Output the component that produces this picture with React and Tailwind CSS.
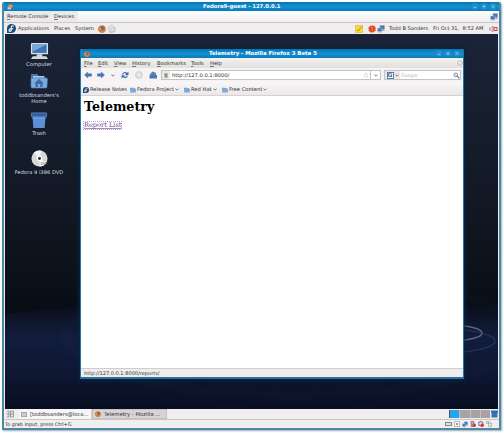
import React from "react";

function Fx({ className = "" }) {
  return (
    <svg viewBox="0 0 16 16" className={"shrink-0 " + className}>
      <circle cx="8" cy="8" r="7.5" fill="#d97a35" />
      <circle cx="8.5" cy="6.5" r="4.2" fill="#5a6f96" />
      <path d="M1 4C3 6 5 5 7 6L5 9C8 12 12 11 14 6C17 13 10 17 5 15C0 12 0 8 1 4Z" fill="#df8233" />
      <path d="M3 6L7 6L5 9Z" fill="#f6b84a" />
    </svg>
  );
}
function Fedora({ className = "" }) {
  return (
    <svg viewBox="0 0 16 16" className={"shrink-0 " + className}>
      <path d="M8 0a8 8 0 1 1 0 16H1.500Q0 16 0 14.500V8A8 8 0 0 1 8 0Z" fill="#1d4a7c" />
      <path d="M12 4C9 2 7.500 4 7.500 6V11C7.500 14 3.500 13.500 3.500 11S5 8.500 7 8.500H11" fill="none" stroke="#fff" strokeWidth="1.900" />
    </svg>
  );
}
function Folder({ className = "", home = false }) {
  return (
    <svg viewBox="0 0 18 16" className={"shrink-0 " + className}>
      <path d="M1 2Q1 1 2 1H7L9 3H15V6H1Z" fill="#4875ad" />
      <rect x="3" y="3" width="11" height="5" fill="#a9c6e8" />
      <path d="M1 5H16.500Q17.500 5 17.400 6L17 14Q17 15 16 15H2Q1 15 1 14Z" fill="#7eabdf" stroke="#4b7ab5" strokeWidth=".7" />
      {home && <path d="M9 6L14 10.500H12.500V14H10.200V11H7.800V14H5.500V10.500H4Z" fill="#3d6ba8" />}
    </svg>
  );
}
function Buttons() {
  return (
    <div className="ml-auto flex shrink-0 gap-[1px]">
      <WinButton d="M2.500 5H5.500" />
      <WinButton d="M2.500 4H5.500M4 2.500V5.500" />
      <WinButton d="M2.700 2.700L5.300 5.300M5.300 2.700L2.700 5.300" />
    </div>
  );
}
function WinButton({ d }) {
  return (
    <svg viewBox="0 0 8 8" className="h-[7px] w-[8px]">
      <rect x=".3" y=".3" width="7.400" height="7.400" rx="1" fill="#2191cd" stroke="#167bb7" strokeWidth=".5" />
      <path d={d} stroke="#a9daf3" strokeWidth=".8" />
    </svg>
  );
}
function Menu({ text, className = "" }) {
  return (
    <span className={"shrink-0 " + className}>
      <span className="underline decoration-[#777] decoration-[0.5px] underline-offset-[1px]">{text[0]}</span>
      {text.slice(1)}
    </span>
  );
}
function Chevron({ className = "" }) {
  return (
    <svg viewBox="0 0 6 4" className={"h-[3px] w-[4px] shrink-0 " + className}>
      <path d="M.7.700L3 3L5.300.700" fill="none" stroke="#555" strokeWidth="1.200" />
    </svg>
  );
}
function Screens({ className = "" }) {
  return (
    <svg viewBox="0 0 16 16" className={"shrink-0 " + className}>
      <rect x="6" y="1" width="9" height="8" fill="#4773ad" stroke="#8fa8cc" />
      <rect x="1" y="6" width="9" height="7" fill="#4a79b6" stroke="#b6c5d8" />
      <path d="M3 14H9M11 11H15" stroke="#9aa5b1" strokeWidth="2" />
    </svg>
  );
}
function Package({ className = "" }) {
  return (
    <svg viewBox="0 0 16 16" className={"shrink-0 " + className}>
      <rect x="3" y="1" width="12" height="9" fill="#e9a44c" stroke="#7b5a33" />
      <path d="M1 8H11V15H1Z" fill="#d8d2c8" stroke="#6a5c4c" />
    </svg>
  );
}
function Arrow({ className = "" }) {
  return (
    <svg viewBox="0 0 16 14" className={"shrink-0 " + className}>
      <path d="M7.500 1L1 7L7.500 13V9.500H15V4.500H7.500Z" fill="#4775b5" stroke="#3b66a5" strokeWidth=".8" />
    </svg>
  );
}
function Swirl({ className = "" }) {
  return (
    <svg viewBox="0 0 12 12" className={"shrink-0 " + className}>
      <circle cx="6" cy="6" r="4.500" fill="none" stroke="currentColor" strokeWidth="1.900" strokeDasharray="2.600 .7" />
    </svg>
  );
}
function Bookmark({ text, className }) {
  return (
    <div className={"flex shrink-0 items-center whitespace-nowrap " + className}>
      <Folder className="mr-[1px] h-[6px] w-[6px]" />
      <span>{text}</span>
      <Chevron className="ml-[1px]" />
    </div>
  );
}
function DesktopIcon({ children, label, className = "" }) {
  return (
    <div className={"flex w-[68px] flex-col items-center text-center text-[5.200px] leading-[6px] text-[#d9dde3] " + className}>
      {children}
      <span className="whitespace-pre">{label}</span>
    </div>
  );
}

function Browser() {
  return (
    <section className="absolute left-[75px] top-[15px] flex h-[330px] w-[384px] flex-col overflow-hidden rounded-t-[2px] border-x border-b-[2px] border-[#27739d] bg-white text-[5.200px] shadow-[0_0_4px_1px_#032746]">
      <header className="flex h-[9px] shrink-0 items-center bg-linear-to-b from-[#0775b8] via-[#148fd0] to-[#0a7cbc] pl-[3px] pr-[2px] text-white">
        <Fx className="h-[6px] w-[6px]" />
        <span className="ml-[119px] whitespace-nowrap text-[5.400px] font-bold">Telemetry - Mozilla Firefox 3 Beta 5</span>
        <Buttons />
      </header>
      <nav className="flex h-[10px] shrink-0 items-center bg-linear-to-b from-[#f3f1f1] to-[#e3dfdf] pl-[3px]">
        <Menu text="File" className="w-[14px]" />
        <Menu text="Edit" className="w-[16px]" />
        <Menu text="View" className="w-[18px]" />
        <Menu text="History" className="w-[25px]" />
        <Menu text="Bookmarks" className="w-[34px]" />
        <Menu text="Tools" className="w-[19px]" />
        <Menu text="Help" />
        <Swirl className="ml-auto h-[6px] w-[6px] text-[#b3afaf]" />
      </nav>
      <div className="flex h-[14px] shrink-0 items-center bg-[#f5f3f4] pl-[3px] pr-[2px]">
        <Arrow className="h-[8px] w-[8px]" />
        <Arrow className="ml-[5px] h-[8px] w-[8px] rotate-180" />
        <Chevron className="ml-[6px]" />
        <svg viewBox="0 0 16 16" className="ml-[6px] h-[8px] w-[8px]">
          <path d="M2 7Q3 2 8 2Q11 2 12 4L15 1V8H8L10.500 5.500Q6 3 4.500 7ZM14 9Q13 14 8 14Q5 14 4 12L1 15V8.500H8L5.500 10.500Q10 13 11.500 9Z" fill="#3b6dad" />
        </svg>
        <svg viewBox="0 0 16 16" className="ml-[6px] h-[8px] w-[8px]">
          <circle cx="8" cy="8" r="7" fill="#dddcdc" stroke="#c4c4c4" />
          <path d="M5 5L11 11M11 5L5 11" stroke="#f1f1f1" strokeWidth="2" />
        </svg>
        <svg viewBox="0 0 16 16" className="ml-[6px] h-[8px] w-[8px]">
          <path d="M7 1L14 4V8H16V15H1V8L3 7V5Z" fill="#4a78b4" />
          <path d="M2 8L8 4L14 8" fill="none" stroke="#6b96cd" strokeWidth="2" />
        </svg>
        <div className="ml-[4px] flex h-[10px] w-[220px] items-center border border-[#c5c2c3] bg-white">
          <span className="flex h-[8px] w-[8px] items-center justify-center bg-[#ece9ea]">
            <span className="h-[5px] w-[4px] border border-[#b4c4bb] bg-[#75987f]" />
          </span>
          <span className="ml-[2px]">http://127.0.0.1:8000/</span>
          <svg viewBox="0 0 10 10" className="ml-auto mr-[1px] h-[6px] w-[6px]">
            <path d="M5 1L6.200 4H9L7 6L8 9L5 7.300L2 9L3 6L1 4H3.800Z" fill="none" stroke="#ccc" strokeWidth=".9" />
          </svg>
          <span className="flex h-full w-[10px] items-center justify-center border-l border-[#c5c2c3]"><Chevron /></span>
        </div>
        <div className="ml-auto flex h-[10px] w-[77px] items-center border border-[#c5c2c3] bg-white text-[#b5b5b5]">
          <span className="flex h-full w-[15px] items-center justify-center gap-[1px] bg-[#ece8e9]">
            <span className="flex h-[7px] w-[7px] items-center justify-center border border-[#587dae] bg-white text-[6px] font-bold leading-none text-[#426ca5]">G</span>
            <Chevron />
          </span>
          <span className="ml-[1px] text-[4.700px]">Google</span>
          <svg viewBox="0 0 10 10" className="ml-auto h-[7px] w-[7px]">
            <circle cx="4" cy="4" r="2.700" fill="#d4dfed" stroke="#667894" />
            <path d="M6 6L9 9" stroke="#5b6779" strokeWidth="1.500" />
          </svg>
        </div>
      </div>
      <div className="flex h-[14px] shrink-0 items-center border-b border-[#d7d1d1] bg-linear-to-b from-[#f8f6f7] to-[#ece8e9] pl-[2px] pt-[2px]">
        <Fedora className="mr-[1px] h-[6px] w-[6px]" />
        <span className="w-[40px] shrink-0 whitespace-nowrap">Release Notes</span>
        <Bookmark text="Fedora Project" className="w-[54px]" />
        <Bookmark text="Red Hat" className="w-[38px]" />
        <Bookmark text="Free Content" className="w-[50px]" />
      </div>
      <main className="flex min-h-0 grow flex-col items-start pl-[3px] font-['DejaVu_Serif',serif]">
        <h1 className="mt-[3px] text-[12.700px] font-bold leading-[16px] text-black">Telemetry</h1>
        <a className="-ml-[1px] mt-[6px] whitespace-nowrap border border-dotted border-[#b7a4c6] text-[6.600px] leading-[7px] text-[#72419b] underline decoration-[#a98bc2] decoration-[0.5px]">Report List</a>
      </main>
      <footer className="flex h-[9px] shrink-0 items-center border-t border-[#d1cdce] bg-[#efedee] pl-[3px] text-[5.050px]">http://127.0.0.1:8000/reports/</footer>
    </section>
  );
}

export default function App() {
  return (
    <div className="h-[433px] w-[504px] overflow-hidden bg-white p-[2px] font-['DejaVu_Sans',sans-serif] text-[5.100px] leading-[7px] text-[#303030]">
      <div className="flex h-[428px] w-[499px] flex-col overflow-hidden rounded-t-[2px] border-x-[2px] border-b-[2px] border-[#4a89a9] bg-[#efedee] shadow-[1px_1px_2px_#9eabb2]">
        <header className="flex h-[9px] shrink-0 items-center bg-linear-to-b from-[#0775b8] via-[#148fd0] to-[#0a7cbc] pl-[3px] pr-[2px] text-white">
          <Package className="h-[6px] w-[6px]" />
          <span className="ml-[190px] whitespace-nowrap text-[5.300px] font-bold">Fedora9-guest - 127.0.0.1</span>
          <Buttons />
        </header>
        <nav className="flex h-[12px] shrink-0 items-center border-b border-[#cbc7c8] bg-linear-to-b from-white to-[#efedee]">
          <div className="flex h-[11px] w-[74px] items-center bg-[#ebe9ea] pl-[3px]">
            <Menu text="Remote Console" className="w-[47px]" />
            <Menu text="Devices" />
          </div>
          <Screens className="ml-auto mr-[1px] h-[8px] w-[8px]" />
        </nav>
        <div className="ml-[1px] mr-[1px] flex h-[11px] shrink-0 items-center bg-[#f0edef] pl-[2px]">
          <Fedora className="h-[9px] w-[9px]" />
          <span className="ml-[2px] w-[36px] shrink-0">Applications</span>
          <span className="w-[21px] shrink-0">Places</span>
          <span className="w-[23px] shrink-0">System</span>
          <Fx className="h-[8px] w-[8px]" />
          <svg viewBox="0 0 16 16" className="ml-[1px] h-[9px] w-[9px]">
            <path d="M2 6L9 1L15 8L14 14L5 15Z" fill="#eee" stroke="#aaa" />
            <circle cx="9" cy="10" r="4" fill="#e3e3e3" stroke="#aaa" />
          </svg>
          <svg viewBox="0 0 16 16" className="ml-auto h-[8px] w-[8px]">
            <path d="M1 1H15V15H1Z" fill="#f6d931" stroke="#d0ab13" />
            <path d="M4 10L6 12L14 3" fill="none" stroke="#8a7d35" strokeWidth="1.600" />
          </svg>
          <svg viewBox="0 0 16 16" className="ml-[5px] h-[8px] w-[8px]">
            <path d="M8 0L10 2L13 1L14 4L16 6L14.500 8L16 11L13 12L12 15L9 14L6 16L4 13L1 12L2 9L0 6L3 4L4 1L7 2Z" fill="#e74920" />
            <path d="M8 4V9M8 10.500V12" stroke="#f28a6c" strokeWidth="2" />
          </svg>
          <Screens className="ml-[1px] h-[8px] w-[8px]" />
          <span className="ml-[4px] w-[44px] shrink-0 whitespace-nowrap">Todd B Sanders</span>
          <span className="w-[56px] shrink-0 whitespace-pre">Fri Oct 31,  8:52 AM</span>
          <svg viewBox="0 0 18 16" className="h-[8px] w-[9px] shrink-0">
            <path d="M1 6H4L8 2V14L4 10H1Z" fill="#ddd" stroke="#777" />
            <rect x="10" y="5" width="6" height="6" fill="#f7dada" stroke="#d33738" strokeWidth="1.800" />
          </svg>
        </div>
        <div className="relative ml-[1px] mr-[1px] flex h-[375px] shrink-0 flex-col bg-linear-to-b from-[#1b2438] via-[#111722] via-50% to-[#080c14] to-75%">
          <svg viewBox="0 0 493 130" className="absolute bottom-0 left-0 h-[130px] w-full" preserveAspectRatio="none">
            <defs>
              <linearGradient id="floor" x2="0" y2="1"><stop stopColor="#0a0f1b" /><stop offset=".3" stopColor="#121d3d" /><stop offset=".65" stopColor="#0e1732" /><stop offset="1" stopColor="#090f22" /></linearGradient>
              <filter id="soft"><feGaussianBlur stdDeviation="3" /></filter>
              <filter id="ring"><feGaussianBlur stdDeviation=".6" /></filter>
            </defs>
            <path d="M0 35Q60 29 90 27H493V130H0Z" fill="url(#floor)" />
            <g filter="url(#soft)" fill="none" stroke="#294164" opacity=".14">
              <ellipse cx="290" cy="57" rx="230" ry="60" strokeWidth="4" />
            </g>
            <g filter="url(#ring)" fill="none">
              <ellipse cx="449" cy="54" rx="28" ry="7.500" stroke="#64738f" strokeWidth="1.600" opacity=".85" />
              <ellipse cx="438" cy="62" rx="52" ry="12" stroke="#34415f" strokeWidth="1.300" opacity=".6" />
            </g>
          </svg>
          <div className="relative flex w-[68px] flex-col">
            <DesktopIcon label="Computer" className="mt-[8px]">
              <svg viewBox="0 0 20 20" className="h-[19px] w-[19px]">
                <rect x="1" y="1" width="18" height="12" rx="1" fill="#dce0e3" />
                <rect x="2.500" y="2.500" width="15" height="9" fill="#3b73b8" />
                <path d="M2.500 2.500H17.500L3 10Z" fill="#79a8dc" />
                <path d="M7 13H13V15H17L19 18H1L3 15H7Z" fill="#d6d8da" />
              </svg>
            </DesktopIcon>
            <DesktopIcon label={"toddbsanders's\nHome"} className="mt-[6px]">
              <Folder home className="mb-[3px] h-[16px] w-[18px]" />
            </DesktopIcon>
            <DesktopIcon label="Trash" className="mt-[8px]">
              <svg viewBox="0 0 18 18" className="mb-[1px] h-[17px] w-[18px]">
                <path d="M2 3L3 17H15L16 3Z" fill="#5a90d6" />
                <path d="M1 1H17V5H1Z" fill="#315d9b" stroke="#5582bd" />
                <path d="M2 6.500H16" stroke="#79a6e0" />
              </svg>
            </DesktopIcon>
            <DesktopIcon label="Fedora 9 i386 DVD" className="mt-[14px]">
              <svg viewBox="0 0 18 18" className="mb-[2px] h-[17px] w-[17px]">
                <circle cx="9" cy="9" r="8.500" fill="#d8d8d8" />
                <path d="M9 9L3 3A8.500 8.500 0 0 1 11 .7ZM9 9L16 14A8.500 8.500 0 0 1 9 17.500Z" fill="#f5f5f5" />
                <circle cx="9" cy="9" r="3" fill="#fff" />
                <circle cx="9" cy="9" r="1.500" fill="#202735" />
                <text x="10" y="16" fontSize="4" fill="#555">DVD</text>
              </svg>
            </DesktopIcon>
          </div>
          <Browser />
        </div>
        <div className="flex h-[10px] shrink-0 items-center bg-[#f0edef] pl-[2px] pr-[1px]">
          <svg viewBox="0 0 16 16" className="h-[8px] w-[8px]">
            <path d="M1 2H6V14H1M9 2H15V14H9ZM9 8H15M1 8H6" fill="#e4e4e4" stroke="#858585" strokeWidth="1.500" />
          </svg>
          <div className="ml-[5px] flex h-full w-[73px] items-center border-r border-[#d0cbcc] bg-[#f7f5f6] pl-[2px]">
            <span className="mr-[3px] h-[5px] w-[6px] border border-[#aaa] bg-[#ccc]" />
            <span className="whitespace-nowrap text-[5.200px]">[toddbsanders@loca...</span>
          </div>
          <div className="flex h-full w-[75px] items-center border border-[#c7c0c1] bg-[#d8d3d4] pl-[2px]">
            <Fx className="h-[6px] w-[6px]" />
            <span className="ml-[3px] whitespace-nowrap text-[5.300px]">Telemetry - Mozilla ...</span>
          </div>
          <div className="ml-auto flex h-[8px] w-[41px] gap-[1px] border-l border-[#555] bg-[#c5bdbf]">
            <span className="grow bg-[#20a6ee]" /><span className="grow bg-[#aaa1a3]" /><span className="grow bg-[#aaa1a3]" /><span className="grow bg-[#aaa1a3]" />
          </div>
          <svg viewBox="0 0 14 16" className="ml-[1px] h-[8px] w-[7px]"><path d="M0 1H14V5H13V15H1V5H0Z" fill="#3973b7" /><path d="M0 4.500H14" stroke="#2a5890" /></svg>
        </div>
        <footer className="flex min-h-0 grow items-center border-t border-[#c8c5c6] bg-[#f0eeef] pl-[1px] pr-[7px]">
          <span className="whitespace-nowrap text-[4.900px]">To grab input, press Ctrl+G</span>
          <div className="ml-auto flex items-center gap-[2px]">
            <span className="h-[4px] w-[7px] border border-[#888] bg-[#ddd]" />
            <span className="flex h-[6px] w-[6px] items-center justify-center border border-[#bbb] bg-white"><span className="h-[2px] w-[2px] bg-[#999]" /></span>
            <Screens className="h-[7px] w-[6px]" />
            <svg viewBox="0 0 12 12" className="h-[6px] w-[6px]"><path d="M2 1H8V11H2Z" fill="#aaa" stroke="#555" /><circle cx="8.500" cy="8.500" r="3.500" fill="#d8394a" /></svg>
            <svg viewBox="0 0 12 12" className="h-[6px] w-[6px]"><circle cx="5.500" cy="5.500" r="4.500" fill="#ddd" stroke="#444" strokeWidth="1.500" /><circle cx="8.500" cy="8.500" r="3.500" fill="#d8394a" /></svg>
            <svg viewBox="0 0 12 12" className="h-[6px] w-[6px]"><path d="M1 1H6V5H1ZM5 4H11V11H5Z" fill="#e6e6e6" stroke="#888" /></svg>
          </div>
        </footer>
      </div>
    </div>
  );
}
